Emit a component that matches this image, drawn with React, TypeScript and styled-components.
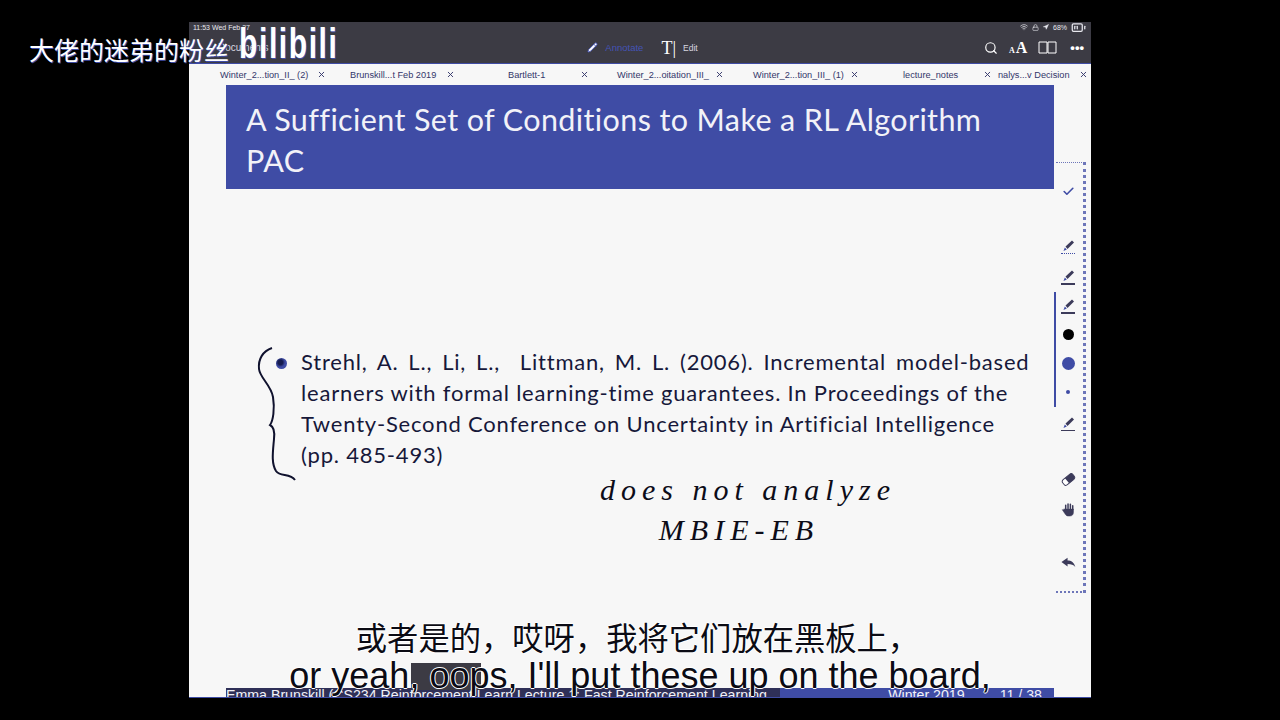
import React from "react";
import styled, { createGlobalStyle } from "styled-components";
import { Search, Check, Pencil, X, Wifi, BatteryMedium, Navigation, Lock } from "lucide-react";

const GlobalStyle = createGlobalStyle`
  html, body { margin: 0; padding: 0; background: #000; }
  body { width: 1280px; height: 720px; overflow: hidden; font-family: "Liberation Sans", sans-serif; }
`;

const Page = styled.div`
  position: relative;
  width: 1280px;
  height: 720px;
  background: #000;
  padding: 22px 189px;
  box-sizing: border-box;
`;

const Tablet = styled.div`
  display: flex;
  flex-direction: column;
  height: 676px;
  background: #f7f7f7;
  border-bottom: 1px solid #3f4ca5;
  box-sizing: border-box;
  overflow: hidden;
`;

const TopBar = styled.div`
  height: 42px;
  flex: none;
  background: #3c3b44;
  color: #fff;
  border-bottom: 1px solid #3f4ca5;
  box-sizing: border-box;
`;

const StatusRow = styled.div`
  display: flex;
  justify-content: space-between;
  align-items: center;
  height: 10px;
  padding: 0 5px 0 4px;
  font-size: 7px;
  color: #e8e8ee;
`;

const StatusIcons = styled.div`
  display: flex;
  align-items: center;
  gap: 4px;
`;

const ToolRow = styled.div`
  display: grid;
  grid-template-columns: 1fr auto 1fr;
  align-items: center;
  height: 31px;
  padding: 0 7px 0 12px;
  box-sizing: border-box;
`;

const BackLabel = styled.span`
  font-size: 10px;
  margin-left: 17px;
  color: #d8d8e0;
`;

const ModeGroup = styled.div`
  display: flex;
  align-items: center;
  gap: 7px;
`;

const ModeLabel = styled.span<{ $active?: boolean }>`
  font-size: ${(p) => (p.$active ? "9.5px" : "8.5px")};
  color: ${(p) => (p.$active ? "#4453b5" : "#d8d8e0")};
  margin-right: ${(p) => (p.$active ? "11px" : "0")};
`;

const TextGlyph = styled.span`
  font-family: "Liberation Serif", serif;
  font-size: 18px;
  line-height: 1;
  color: #fff;
`;

const RightTools = styled.div`
  display: flex;
  justify-content: flex-end;
  align-items: center;
  gap: 11px;
`;

const FontSizeGlyph = styled.span`
  font-family: "Liberation Serif", serif;
  font-size: 16px;
  font-weight: bold;
  color: #fff;
  white-space: nowrap;
`;

const SmallA = styled.span`
  font-size: 8px;
  margin-right: 1px;
`;

const Dots = styled.span`
  font-size: 13px;
  line-height: 1;
  margin-left: 2px;
  font-weight: bold;
`;

const TabBar = styled.div`
  display: flex;
  height: 21px;
  flex: none;
  align-items: center;
  font-size: 9.2px;
  color: #33366a;
`;

const Tab = styled.div<{ $w: number; $pad: number }>`
  display: flex;
  align-items: center;
  justify-content: space-between;
  width: ${(p) => p.$w}px;
  padding: 0 3px 0 ${(p) => p.$pad}px;
  box-sizing: border-box;
  white-space: nowrap;
`;

const Body = styled.div`
  flex: 1;
  display: flex;
  min-height: 0;
`;

const Slide = styled.div`
  flex: 1;
  display: flex;
  flex-direction: column;
  padding-left: 37px;
  min-width: 0;
`;

const Frametitle = styled.h1`
  margin: 0;
  height: 104px;
  flex: none;
  box-sizing: border-box;
  padding: 14px 20px 0;
  background: #3f4ca5;
  color: #f2f2f8;
  font-family: "Lato", sans-serif;
  font-weight: 400;
  font-size: 30.5px;
  line-height: 41px;
  letter-spacing: 0.39px;
`;

const Content = styled.div`
  flex: 1;
  display: flex;
  flex-direction: column;
  min-height: 0;
`;

const Reference = styled.div`
  display: flex;
  margin: 157px 0 0 30px;
  align-items: flex-start;
`;

const Brace = styled.svg`
  flex: none;
  width: 40px;
  height: 136px;
  margin-top: 1px;
`;

const Bullet = styled.span`
  flex: none;
  width: 11px;
  height: 11px;
  margin: 12px 14px 0 -20px;
  border-radius: 50%;
  background: radial-gradient(circle at 40% 40%, #161c50 25%, #3f4ca5 50%);
`;

const RefText = styled.p`
  margin: 0;
  font-family: "Lato", sans-serif;
  font-size: 22px;
  line-height: 31px;
  letter-spacing: 0.8px;
  color: #16183a;
  white-space: nowrap;
`;

const FirstLine = styled.span`
  word-spacing: 3.5px;
`;

const Ink = styled.div`
  margin: -13px 0 0 372px;
  font-family: "Liberation Serif", serif;
  font-style: italic;
  font-size: 30px;
  line-height: 40px;
  color: #0c0c18;
  text-align: center;
  width: 300px;
  letter-spacing: 6px;
  white-space: nowrap;
`;

const InkLine = styled.div<{ $shift?: number }>`
  padding-right: ${(p) => p.$shift ?? 0}px;
`;

const Footer = styled.div`
  margin-top: auto;
  height: 9px;
  flex: none;
  display: flex;
  overflow: hidden;
  font-size: 14.2px;
  line-height: 15px;
  white-space: nowrap;
`;

const FooterLeft = styled.div`
  width: 554px;
  flex: none;
  color: #f2f2f8;
  background: #2f3058;
`;

const FooterRight = styled.div`
  flex: 1;
  display: flex;
  justify-content: flex-end;
  gap: 35px;
  padding-right: 12px;
  background: #3f4ca5;
  color: #f2f2f8;
`;

const Palette = styled.div`
  flex: none;
  width: 37px;
  position: relative;
  display: flex;
  flex-direction: column;
  align-items: center;
  padding: 100px 9px 0 0;
  box-sizing: border-box;
  color: #3c3b5a;
`;

const PaletteTray = styled.div`
  position: absolute;
  left: 2px;
  top: 77px;
  width: 27px;
  height: 428px;
  border-style: dotted;
  border-color: #3f4ca5;
  border-width: 1px 3px 2px 0;
  opacity: 0.75;
`;

const PaletteSlot = styled.div<{ $h: number }>`
  flex: none;
  height: ${(p) => p.$h}px;
  display: flex;
  align-items: flex-start;
  justify-content: center;
`;

const PenIcon = styled.div`
  display: flex;
  flex-direction: column;
  align-items: center;
  gap: 1px;
`;

const PenBase = styled.span<{ $h: number; $dotted?: boolean }>`
  display: block;
  width: 14px;
  height: ${(p) => (p.$dotted ? 0 : p.$h)}px;
  background: ${(p) => (p.$dotted ? "transparent" : "#3c3b5a")};
  border-top: ${(p) => (p.$dotted ? "1px dotted #3f4ca5" : "none")};
`;

const Dot = styled.span<{ $size: number; $color: string }>`
  display: block;
  width: ${(p) => p.$size}px;
  height: ${(p) => p.$size}px;
  border-radius: 50%;
  background: ${(p) => p.$color};
`;

const Scroll = styled.div`
  position: absolute;
  left: 0;
  top: 207px;
  width: 2px;
  height: 115px;
  background: #3f4ca5;
`;

const Watermark = styled.div`
  position: absolute;
  left: 29px;
  top: 35px;
  height: 28px;
  display: flex;
  align-items: center;
  color: #fff;
  font-family: "Noto Sans CJK SC", sans-serif;
  font-size: 25px;
  line-height: 28px;
  white-space: nowrap;
  text-shadow: 1px 1px 0 #3f4ca5;
`;

const BiliMark = styled.span`
  font-family: "Liberation Sans", sans-serif;
  font-weight: bold;
  font-size: 30px;
  line-height: 34px;
  letter-spacing: 1.6px;
  margin-left: 10px;
  transform: translateY(-5px) scaleY(1.4);
`;

const Subtitles = styled.div`
  position: absolute;
  left: 189px;
  width: 902px;
  top: 615px;
  text-align: center;
  color: #0b0b14;
  text-shadow: 1px 0 0 #fff, -1px 0 0 #fff, 0 1px 0 #fff, 0 -1px 0 #fff;
`;

const SubZh = styled.div`
  font-family: "Noto Sans CJK SC", sans-serif;
  font-size: 31.3px;
  line-height: 43px;
  margin-left: -5px;
  white-space: nowrap;
`;

const SubEn = styled.div`
  font-family: "Liberation Sans", sans-serif;
  font-size: 36px;
  line-height: 36px;
  white-space: nowrap;
`;

const SubPatch = styled.div`
  position: absolute;
  left: 411px;
  top: 663px;
  width: 70px;
  height: 27px;
  background: #3c3b44;
`;

const tabs: [string, number, number][] = [
  ["Winter_2...tion_II_ (2)", 140, 31],
  ["Brunskill...t Feb 2019", 129, 21],
  ["Bartlett-1", 134, 50],
  ["Winter_2...oitation_III_", 135, 25],
  ["Winter_2...tion_III_ (1)", 135, 26],
  ["lecture_notes", 133, 41],
  ["nalys...v Decision", 96, 3],
];

const Pen = ({ base, dotted }: { base?: number; dotted?: boolean }) => (
  <PenIcon>
    <svg width="14" height="13" viewBox="0 0 14 13">
      <path d="M4.500 7.500L11 1.500l2 2-6.500 6.500z" fill="#3c3b5a" />
      <path d="M2.500 12l1.300-3.500 2 2z" fill="#3f4ca5" />
    </svg>
    {base ? <PenBase $h={base} $dotted={dotted} /> : null}
  </PenIcon>
);

const EraserIcon = () => (
  <svg width="15" height="15" viewBox="0 0 16 16">
    <g transform="rotate(-40 8 8)">
      <rect x="1" y="4.500" width="14" height="7" rx="2.500" fill="#fff" stroke="#3c3b5a" />
      <path d="M6 4.500h6.500A2.500 2.500 0 0 1 15 7v2a2.500 2.500 0 0 1-2.500 2.500H6z" fill="#3c3b5a" />
    </g>
  </svg>
);

const HandIcon = () => (
  <svg width="15" height="15" viewBox="0 0 16 16" stroke="#3c3b5a" strokeLinecap="round" fill="#3c3b5a">
    <path d="M5 8V3.500M7.500 7V2M10 7V2.500M12.500 8V4" strokeWidth="1.600" fill="none" />
    <path d="M4 7.500h9.300V11c0 2.500-1.500 4-4 4H8c-2 0-3-1-4-2.800L1.500 8.500z" strokeWidth="0.500" />
  </svg>
);

const UndoIcon = () => (
  <svg width="15" height="13" viewBox="0 0 16 13">
    <path d="M0.500 6L7 1.500v2.800c4 0 7 2 8.300 7-2-2.500-4.300-3.300-8.300-3.300v2.800z" fill="#3c3b5a" />
  </svg>
);

const App = () => {
  return (
    <Page>
      <GlobalStyle />
      <Tablet>
        <TopBar>
          <StatusRow>
            <span>11:53 Wed Feb 27</span>
            <StatusIcons>
              <Wifi size={8} />
              <Lock size={7} />
              <Navigation size={6} fill="#e8e8ee" />
              <span>68%</span>
              <BatteryMedium size={15} />
            </StatusIcons>
          </StatusRow>
          <ToolRow>
            <BackLabel>Documents</BackLabel>
            <ModeGroup>
              <Pencil size={11} color="#4453b5" fill="#fff" />
              <ModeLabel $active>Annotate</ModeLabel>
              <TextGlyph>T|</TextGlyph>
              <ModeLabel>Edit</ModeLabel>
            </ModeGroup>
            <RightTools>
              <Search size={14} />
              <FontSizeGlyph>
                <SmallA>A</SmallA>A
              </FontSizeGlyph>
              <svg width="19" height="13" viewBox="0 0 19 13" fill="none" stroke="#fff">
                <path d="M1 1h8v11H1zM10 1h8v11h-8z" />
              </svg>
              <Dots>•••</Dots>
            </RightTools>
          </ToolRow>
        </TopBar>
        <TabBar>
          {tabs.map(([name, w, pad]) => (
            <Tab key={name} $w={w} $pad={pad}>
              <span>{name}</span>
              <X size={9} strokeWidth={2.5} />
            </Tab>
          ))}
        </TabBar>
        <Body>
          <Slide>
            <Frametitle>
              A Sufficient Set of Conditions to Make a RL Algorithm
              <br />
              PAC
            </Frametitle>
            <Content>
              <Reference>
                <Brace viewBox="0 0 40 136" fill="none" stroke="#10122e" strokeWidth="2">
                  <path d="M16 1C7 4 2 12 3 22c1 9 12 16 14 28 2 12 0 24-3 28 4 2 5 6 4 14-1 12-3 24 2 32 4 6 14 2 19 9" />
                </Brace>
                <Bullet />
                <RefText>
                  <FirstLine>Strehl, A. L., Li, L., &nbsp;Littman, M. L. (2006). Incremental model-based</FirstLine>
                  <br />
                  learners with formal learning-time guarantees. In Proceedings of the
                  <br />
                  Twenty-Second Conference on Uncertainty in Artificial Intelligence
                  <br />
                  (pp. 485-493)
                </RefText>
              </Reference>
              <Ink>
                <InkLine>does not analyze</InkLine>
                <InkLine $shift={18}>MBIE-EB</InkLine>
              </Ink>
              <Footer>
                <FooterLeft>Emma Brunskill (CS234 Reinforcement Learn Lecture 1: Fast Reinforcement Learning</FooterLeft>
                <FooterRight>
                  <span>Winter 2019</span>
                  <span>11 / 38</span>
                </FooterRight>
              </Footer>
            </Content>
          </Slide>
          <Palette>
            <Scroll />
            <PaletteTray />
            <PaletteSlot $h={54}><Check size={13} color="#3f4ca5" strokeWidth={3} /></PaletteSlot>
            <PaletteSlot $h={30}><Pen base={1} dotted /></PaletteSlot>
            <PaletteSlot $h={29}><Pen base={2} /></PaletteSlot>
            <PaletteSlot $h={31}><Pen base={2} /></PaletteSlot>
            <PaletteSlot $h={28}><Dot $size={11} $color="#000" /></PaletteSlot>
            <PaletteSlot $h={33}><Dot $size={13} $color="#3f4ca5" /></PaletteSlot>
            <PaletteSlot $h={26}><Dot $size={4} $color="#3f4ca5" /></PaletteSlot>
            <PaletteSlot $h={56}><Pen base={1} /></PaletteSlot>
            <PaletteSlot $h={30}><EraserIcon /></PaletteSlot>
            <PaletteSlot $h={54}><HandIcon /></PaletteSlot>
            <PaletteSlot $h={20}><UndoIcon /></PaletteSlot>
          </Palette>
        </Body>
      </Tablet>
      <Watermark>
        大佬的迷弟的粉丝
        <BiliMark>bilibili</BiliMark>
      </Watermark>
      <SubPatch />
      <Subtitles>
        <SubZh>或者是的，哎呀，我将它们放在黑板上，</SubZh>
        <SubEn>or yeah, oops, I'll put these up on the board,</SubEn>
      </Subtitles>
    </Page>
  );
};

export default App;
